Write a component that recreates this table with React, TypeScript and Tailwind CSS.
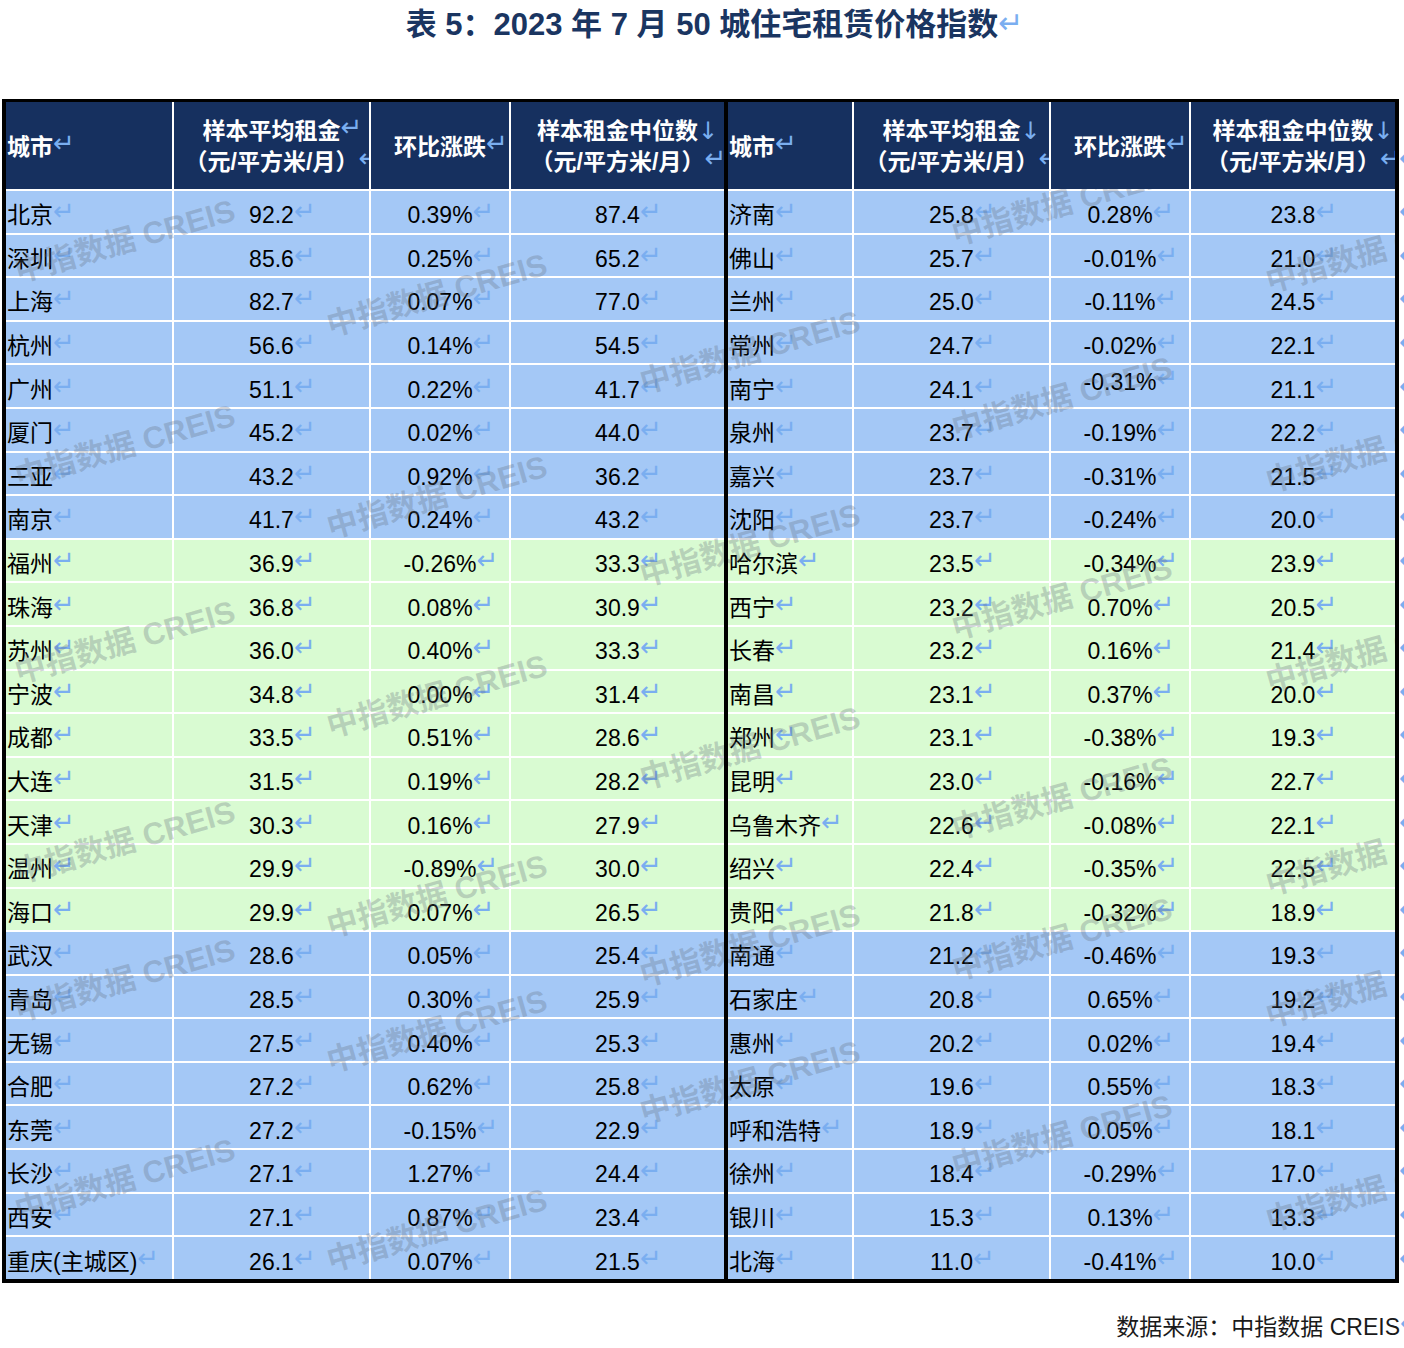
import React from "react";

type Row = [string, string, string, string, boolean?];

const leftRows: Row[] = [
  ["北京", "92.2", "0.39%", "87.4"],
  ["深圳", "85.6", "0.25%", "65.2"],
  ["上海", "82.7", "0.07%", "77.0"],
  ["杭州", "56.6", "0.14%", "54.5"],
  ["广州", "51.1", "0.22%", "41.7"],
  ["厦门", "45.2", "0.02%", "44.0"],
  ["三亚", "43.2", "0.92%", "36.2"],
  ["南京", "41.7", "0.24%", "43.2"],
  ["福州", "36.9", "-0.26%", "33.3"],
  ["珠海", "36.8", "0.08%", "30.9"],
  ["苏州", "36.0", "0.40%", "33.3"],
  ["宁波", "34.8", "0.00%", "31.4"],
  ["成都", "33.5", "0.51%", "28.6"],
  ["大连", "31.5", "0.19%", "28.2"],
  ["天津", "30.3", "0.16%", "27.9"],
  ["温州", "29.9", "-0.89%", "30.0"],
  ["海口", "29.9", "0.07%", "26.5"],
  ["武汉", "28.6", "0.05%", "25.4"],
  ["青岛", "28.5", "0.30%", "25.9"],
  ["无锡", "27.5", "0.40%", "25.3"],
  ["合肥", "27.2", "0.62%", "25.8"],
  ["东莞", "27.2", "-0.15%", "22.9"],
  ["长沙", "27.1", "1.27%", "24.4"],
  ["西安", "27.1", "0.87%", "23.4"],
  ["重庆(主城区)", "26.1", "0.07%", "21.5"],
];

const rightRows: Row[] = [
  ["济南", "25.8", "0.28%", "23.8"],
  ["佛山", "25.7", "-0.01%", "21.0"],
  ["兰州", "25.0", "-0.11%", "24.5"],
  ["常州", "24.7", "-0.02%", "22.1"],
  ["南宁", "24.1", "-0.31%", "21.1", true],
  ["泉州", "23.7", "-0.19%", "22.2"],
  ["嘉兴", "23.7", "-0.31%", "21.5"],
  ["沈阳", "23.7", "-0.24%", "20.0"],
  ["哈尔滨", "23.5", "-0.34%", "23.9"],
  ["西宁", "23.2", "0.70%", "20.5"],
  ["长春", "23.2", "0.16%", "21.4"],
  ["南昌", "23.1", "0.37%", "20.0"],
  ["郑州", "23.1", "-0.38%", "19.3"],
  ["昆明", "23.0", "-0.16%", "22.7"],
  ["乌鲁木齐", "22.6", "-0.08%", "22.1"],
  ["绍兴", "22.4", "-0.35%", "22.5"],
  ["贵阳", "21.8", "-0.32%", "18.9"],
  ["南通", "21.2", "-0.46%", "19.3"],
  ["石家庄", "20.8", "0.65%", "19.2"],
  ["惠州", "20.2", "0.02%", "19.4"],
  ["太原", "19.6", "0.55%", "18.3"],
  ["呼和浩特", "18.9", "0.05%", "18.1"],
  ["徐州", "18.4", "-0.29%", "17.0"],
  ["银川", "15.3", "0.13%", "13.3"],
  ["北海", "11.0", "-0.41%", "10.0"],
];

// watermark centres in page coords, per column of the tiled pattern
const marks: [number, number[]][] = [
  [125, [241, 446, 642, 842, 980, 1180]],
  [437, [295, 497, 696, 896, 1031, 1230]],
  [750, [352, 545, 748, 945, 1082]],
  [1062, [204, 398, 598, 798, 939, 1136]],
  [1376, [251, 451, 651, 854, 986, 1190]],
];

// Word's paragraph mark: hangs after the text, takes no width
function Ret({ big }: { big?: boolean }) {
  return (
    <span
      className={`inline-block w-0 overflow-visible whitespace-nowrap font-['DejaVu_Sans'] font-normal leading-none text-[#7aaef0] ${
        big ? "-translate-y-[2px] text-[30px]" : "-translate-y-[3px] text-[26px]"
      }`}
    >
      ↵
    </span>
  );
}

function Down() {
  return (
    <span className="inline-block w-0 overflow-visible whitespace-nowrap font-['DejaVu_Sans'] text-[24px] font-normal leading-none text-[#7aaef0]">
      ↓
    </span>
  );
}

const green = (i: number) => i >= 8 && i <= 16;

function Header({ right }: { right?: boolean }) {
  const head = "flex flex-col items-center justify-center overflow-hidden bg-[#16305f]";
  return (
    <div
      className={`grid h-[87px] gap-x-[2px] bg-white ${
        right ? "grid-cols-[124px_195px_138px_204px]" : "grid-cols-[166px_195px_138px_213px]"
      }`}
    >
      <div className="flex items-center overflow-hidden bg-[#16305f] pl-[1px] pt-[4px]">
        <span>
          城市
          <Ret />
        </span>
      </div>
      <div className={`${head} pt-[3px]`}>
        <div>
          样本平均租金
          {right ? <Down /> : <Ret />}
        </div>
        <div>
          （元/平方米/月）
          <Ret />
        </div>
      </div>
      <div className={`${head} pt-[4px]`}>
        <div>
          环比涨跌
          <Ret />
        </div>
      </div>
      <div className={`${head} pt-[3px]`}>
        <div>
          样本租金中位数
          <Down />
        </div>
        <div>
          （元/平方米/月）
          <Ret />
        </div>
      </div>
    </div>
  );
}

function Body({ rows, right }: { rows: Row[]; right?: boolean }) {
  return (
    <div
      className={`grid auto-rows-[41.6px] gap-[2px] bg-white pt-[2px] ${
        right ? "grid-cols-[124px_195px_138px_204px]" : "grid-cols-[166px_195px_138px_213px]"
      }`}
    >
      {rows.map((r, i) => {
        const bg = green(i) ? "bg-[#d9fbd2]" : "bg-[#a4c8f6]";
        return (
          <React.Fragment key={r[0]}>
            <div className={`flex items-center pl-[1px] pt-2 ${bg}`}>
              <span>
                {r[0]}
                <Ret />
              </span>
            </div>
            <div className={`flex items-center justify-center pt-2 ${bg}`}>
              <span>
                {r[1]}
                <Ret />
              </span>
            </div>
            <div className={`flex items-center justify-center ${r[4] ? "pb-2" : "pt-2"} ${bg}`}>
              <span>
                {r[2]}
                <Ret />
              </span>
            </div>
            <div className={`flex items-center justify-center pt-2 ${bg}`}>
              <span>
                {r[3]}
                <Ret />
              </span>
            </div>
          </React.Fragment>
        );
      })}
    </div>
  );
}

export default function App() {
  return (
    <div className="w-[1404px] overflow-hidden bg-white pb-[5px] font-['Liberation_Sans','Noto_Sans_CJK_SC',sans-serif] text-black">
      <div className="flex h-[50px] items-center justify-center text-[31px] font-bold text-[#1a3561]">
        <span>
          表 5：2023 年 7 月 50 城住宅租赁价格指数
          <Ret big />
        </span>
      </div>

      <div className="mt-[49px] flex">
        <div className="ml-[2px] w-[1397px] border-x-4 border-t-[3px] border-b-4 border-black text-[23px] leading-[31px]">
          <div className="flex text-white font-bold">
            <Header />
            <div className="w-[4px] bg-black" />
            <Header right />
          </div>
          <div className="relative overflow-hidden">
            <div className="flex">
              <Body rows={leftRows} />
              <div className="relative z-10 w-[4px] bg-black" />
              <Body rows={rightRows} right />
            </div>
            <div className="pointer-events-none absolute inset-0">
              {marks.flatMap(([x, ys]) =>
                ys.map((y) => (
                  <div
                    key={`${x}-${y}`}
                    className="absolute whitespace-nowrap text-[31px] font-bold leading-none text-[rgba(95,105,120,0.28)]"
                    style={{ left: x - 6, top: y - 189, transform: "translate(-50%, -50%) rotate(-16deg)" }}
                  >
                    中指数据 CREIS
                  </div>
                ))
              )}
            </div>
          </div>
        </div>

        {/* row-end marks peeking out past the right border */}
        <div className="w-[5px] overflow-hidden text-[23px] leading-[31px]">
          <div className="h-[3px]" />
          <div className="flex h-[87px] flex-col justify-center pt-[3px]">
            <div>&nbsp;</div>
            <div>
              <Ret />
            </div>
          </div>
          <div className="grid auto-rows-[41.6px] gap-[2px] pt-[2px]">
            {rightRows.map((r) => (
              <div key={r[0]} className="flex items-center pt-2">
                <span>
                  <Ret />
                </span>
              </div>
            ))}
          </div>
        </div>
      </div>

      <div className="mt-[29px] flex justify-end pr-[4px] text-[23px] leading-[30px] text-[#1a1a1a]">
        <span>
          数据来源：中指数据 CREIS
          <Ret />
        </span>
      </div>
    </div>
  );
}
